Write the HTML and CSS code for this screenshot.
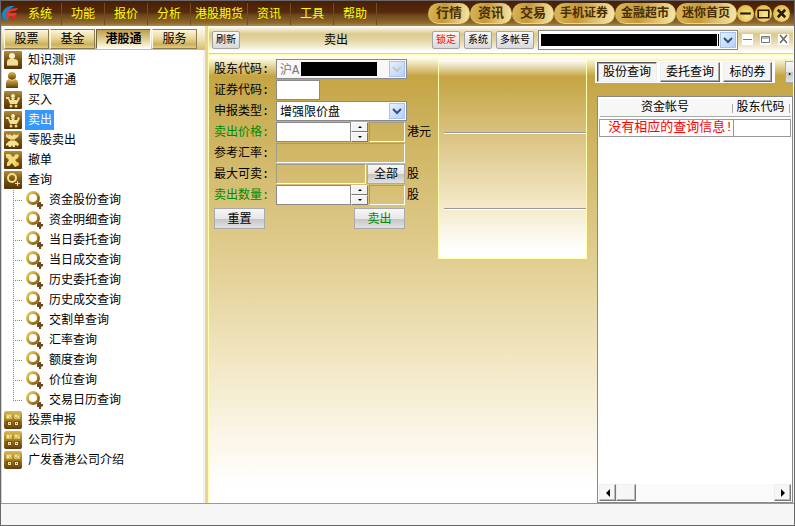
FILE: index.html
```html
<!DOCTYPE html>
<html lang="zh-CN">
<head>
<meta charset="utf-8">
<title>卖出</title>
<link rel="stylesheet" href="styles.css">
</head>
<body>
<svg class="defs" aria-hidden="true">
  <defs>
    <linearGradient id="dark" x1="0" y1="0" x2="0" y2="1"><stop offset="0" stop-color="#b18c3e"/><stop offset=".45" stop-color="#7c5716"/><stop offset="1" stop-color="#563306"/></linearGradient>
    <linearGradient id="gold" x1="0" y1="0" x2="1" y2="1"><stop offset="0" stop-color="#e8cf68"/><stop offset=".5" stop-color="#bd962f"/><stop offset="1" stop-color="#76500c"/></linearGradient>
    <linearGradient id="bust" x1="0" y1="0" x2="0" y2="1"><stop offset="0" stop-color="#d8bb59"/><stop offset=".5" stop-color="#a37b25"/><stop offset="1" stop-color="#603b07"/></linearGradient>
    <symbol id="i-person" viewBox="0 0 18 18"><rect width="18" height="18" rx="1" fill="url(#dark)"/><circle cx="8" cy="5" r="3" fill="#f8f0c4"/><path d="M3 15v-4q0-3 3-3h4q4 0 4 3v4z" fill="#f1df98"/><path d="M3 14h11v1H3z" fill="#c59c3c"/></symbol>
    <symbol id="i-bust" viewBox="0 0 18 18"><circle cx="8" cy="5" r="4" fill="url(#bust)"/><path d="M2 17v-5q0-3 3-4 3 2 6 0 3 1 3 4v5z" fill="url(#bust)"/><path d="M5 8q3 3 6 0" fill="none" stroke="#e5cf85"/></symbol>
    <symbol id="i-cart" viewBox="0 0 18 18"><rect width="18" height="18" rx="1" fill="url(#dark)"/><circle cx="9" cy="5" r="2" fill="#f8ecb5"/><path d="M2 6h3l1 3h2l-1-2h4l-1 2h3l1-3 2 1-3 6H6L4 8H2z" fill="#f3e193"/><circle cx="7" cy="15" r="1.500" fill="#ecd373"/><circle cx="12" cy="15" r="1.500" fill="#ecd373"/></symbol>
    <symbol id="i-odd" viewBox="0 0 18 18"><rect width="18" height="18" rx="1" fill="url(#dark)"/><path d="M2 3l3 1 1-1 2 2 2-2 2 1 3-1-1 3-3 2H5L2 6z" fill="#efdd91"/><path d="M6 8h5v2H6z" fill="#c7a247"/><path d="M5 10h7l3 3-1 2-3-1v2H9l-1-2-1 2H5l-1-2-2 1v-2z" fill="#f3e294"/></symbol>
    <symbol id="i-cancel" viewBox="0 0 18 18"><rect width="18" height="18" rx="1" fill="url(#dark)"/><path d="M2 3h4l3 3 3-3 3 1-1 3-3 2 3 3-1 3-2 1-3-4-3 3H3v-3l2-3-3-3z" fill="#f1dc79"/><circle cx="13" cy="13" r="2" fill="#f4c73e"/></symbol>
    <symbol id="i-search" viewBox="0 0 18 18"><rect width="18" height="18" rx="1" fill="url(#dark)"/><circle cx="8" cy="7" r="4" fill="none" stroke="#f3e18c" stroke-width="2"/><path d="M11 12h2v-2h1v2h2v1h-2v2h-1v-2h-2z" fill="#f5dc76"/></symbol>
    <symbol id="i-lens" viewBox="0 0 18 18"><circle cx="8" cy="7" r="5.500" fill="none" stroke="url(#gold)" stroke-width="3"/><path d="M11 10l4 4" stroke="#9b7324" stroke-width="2"/><path d="M12 13l2-2h2v2h2v2l-2 1v2h-2v-2h-2z" fill="#6b481a"/></symbol>
    <symbol id="i-grid" viewBox="0 0 18 18"><rect width="18" height="18" rx="2" fill="url(#bust)"/><path d="M2 3h6v5H2zM10 3h6v5h-6z" fill="#d9bb56"/><path d="M2 10h6v6H2zM10 10h6v6h-6z" fill="#76501a"/><path d="M3 4h2v3H3zM6 4h1v2H6zM11 4h2v2h-2zM14 5h1v2h-1zM4 11h3v3H4zM11 11h3v3h-3z" fill="#f5e5a2"/><path d="M5 12h1v1H5zM12 12h1v1h-1z" fill="#76501a"/></symbol>
    <symbol id="i-down" viewBox="0 0 10 10"><path d="M1 3l4 4 4-4" fill="none" stroke="currentColor" stroke-width="2"/></symbol>
  </defs>
</svg>
<div class="app">
  <header class="top">
    <svg class="logo" viewBox="0 0 16 16" aria-label="logo"><path d="M13 0C6-1 0 3 0 9q0 4 6 6C3 10 5 4 13 0z" fill="#1688cc"/><path d="M5 5q4-3 11-3-1 3-5 3-3 0-4 2h8l-2 3H8q-2 1-2 5-3-5-1-10z" fill="#ef3528"/><path d="M10 10h5q-2 4-6 5 2-2 1-5z" fill="#d8271e"/></svg>
    <nav class="menu">
      <a href="#">系统</a><a href="#">功能</a><a href="#">报价</a><a href="#">分析</a><a href="#">港股期货</a><a href="#">资讯</a><a href="#">工具</a><a href="#">帮助</a>
    </nav>
    <nav class="pills">
      <button>行情</button><button>资讯</button><button>交易</button><button>手机证券</button><button>金融超市</button><button>迷你首页</button>
    </nav>
    <div class="winbtns">
      <button aria-label="最小化"><svg viewBox="0 0 16 16"><path d="M3 8h10" stroke="#2c1700" stroke-width="2"/></svg></button>
      <button aria-label="最大化"><svg viewBox="0 0 16 16"><path d="M3 5h10v7H3z" fill="none" stroke="#2c1700" stroke-width="1.500"/></svg></button>
      <button aria-label="关闭"><svg viewBox="0 0 16 16"><path d="M4.500 4.500l7 7M11.500 4.500l-7 7" stroke="#2c1700" stroke-width="2.500"/></svg></button>
    </div>
  </header>
  <div class="main">
    <aside class="side">
      <div class="tabs">
        <button>股票</button><button>基金</button><button class="on">港股通</button><button>服务</button>
      </div>
      <ul class="tree">
        <li><a href="#"><svg><use href="#i-person"/></svg><span>知识测评</span></a></li>
        <li><a href="#"><svg><use href="#i-bust"/></svg><span>权限开通</span></a></li>
        <li><a href="#"><svg><use href="#i-cart"/></svg><span>买入</span></a></li>
        <li><a href="#" class="sel"><svg><use href="#i-cart"/></svg><span>卖出</span></a></li>
        <li><a href="#"><svg><use href="#i-odd"/></svg><span>零股卖出</span></a></li>
        <li><a href="#"><svg><use href="#i-cancel"/></svg><span>撤单</span></a></li>
        <li><a href="#"><svg><use href="#i-search"/></svg><span>查询</span></a>
          <ul>
            <li><a href="#"><svg><use href="#i-lens"/></svg><span>资金股份查询</span></a></li>
            <li><a href="#"><svg><use href="#i-lens"/></svg><span>资金明细查询</span></a></li>
            <li><a href="#"><svg><use href="#i-lens"/></svg><span>当日委托查询</span></a></li>
            <li><a href="#"><svg><use href="#i-lens"/></svg><span>当日成交查询</span></a></li>
            <li><a href="#"><svg><use href="#i-lens"/></svg><span>历史委托查询</span></a></li>
            <li><a href="#"><svg><use href="#i-lens"/></svg><span>历史成交查询</span></a></li>
            <li><a href="#"><svg><use href="#i-lens"/></svg><span>交割单查询</span></a></li>
            <li><a href="#"><svg><use href="#i-lens"/></svg><span>汇率查询</span></a></li>
            <li><a href="#"><svg><use href="#i-lens"/></svg><span>额度查询</span></a></li>
            <li><a href="#"><svg><use href="#i-lens"/></svg><span>价位查询</span></a></li>
            <li><a href="#"><svg><use href="#i-lens"/></svg><span>交易日历查询</span></a></li>
          </ul>
        </li>
        <li><a href="#"><svg><use href="#i-grid"/></svg><span>投票申报</span></a></li>
        <li><a href="#"><svg><use href="#i-grid"/></svg><span>公司行为</span></a></li>
        <li><a href="#"><svg><use href="#i-grid"/></svg><span>广发香港公司介绍</span></a></li>
      </ul>
    </aside>
    <section class="work">
      <div class="bar">
        <button class="small">刷新</button>
        <h1>卖出</h1>
        <button class="small red">锁定</button>
        <button class="small">系统</button>
        <button class="small">多帐号</button>
        <div class="combo account">
          <select aria-label="帐号"><option></option></select>
          <i class="mask"></i><i class="caret"></i>
          <span class="arrow"><svg><use href="#i-down"/></svg></span>
        </div>
        <div class="mdi">
          <button aria-label="最小化窗口"><svg viewBox="0 0 11 11"><path d="M1 5.500h9" stroke="#777"/></svg></button>
          <button aria-label="还原窗口"><svg viewBox="0 0 11 11"><path d="M1.500 2.500h8v6h-8zM1 4h9" fill="none" stroke="#777"/></svg></button>
          <button aria-label="关闭窗口"><svg viewBox="0 0 11 11"><path d="M2 1l7 8M9 1l-7 8" stroke="#666" stroke-width="1.500"/></svg></button>
        </div>
      </div>
      <div class="body">
        <form class="form">
          <label for="holder">股东代码:</label>
          <div class="combo off"><select id="holder"><option>沪A</option></select><i class="mask"></i><span class="arrow"><svg><use href="#i-down"/></svg></span></div><span></span>
          <label for="code">证券代码:</label>
          <input id="code" class="code"><span></span>
          <label for="type">申报类型:</label>
          <div class="combo"><select id="type"><option>增强限价盘</option></select><span class="arrow"><svg><use href="#i-down"/></svg></span></div><span></span>
          <label for="price" class="green">卖出价格:</label>
          <div class="line"><input id="price"><span class="spin"><button type="button" aria-label="加价"><i class="up"></i></button><button type="button" aria-label="减价"><i class="down"></i></button></span><output class="sunk tiny"></output></div><span>港元</span>
          <label for="rate">参考汇率:</label>
          <div class="line"><output id="rate" class="sunk"></output></div><span></span>
          <label for="max">最大可卖:</label>
          <div class="line"><output id="max" class="sunk"></output><button type="button" class="silver all">全部</button></div><span>股</span>
          <label for="qty" class="green">卖出数量:</label>
          <div class="line"><input id="qty"><span class="spin"><button type="button" aria-label="增加"><i class="up"></i></button><button type="button" aria-label="减少"><i class="down"></i></button></span><output class="sunk tiny"></output></div><span>股</span>
          <div class="actions"><button type="reset" class="silver">重置</button><button type="button" class="silver green">卖出</button></div>
        </form>
        <div class="quote"><div></div><div></div><div></div></div>
        <div class="result">
          <div class="rtop">
            <div class="rtabs"><button class="on">股份查询</button><button>委托查询</button><button class="short">标的券</button></div>
            <button class="silver more" aria-label="更多">.</button>
          </div>
          <div class="box">
            <table>
              <thead><tr><th class="c1">资金帐号</th><th>股东代码</th></tr></thead>
              <tbody><tr><td>没有相应的查询信息!</td><td></td></tr></tbody>
            </table>
            <div class="scroll"><button aria-label="向左"><i class="left"></i></button><button aria-label="滑块"></button><span></span><button aria-label="向右"><i class="right"></i></button></div>
          </div>
        </div>
      </div>
    </section>
  </div>
  <footer class="status"></footer>
</div>
</body>
</html>
```
FILE: styles.css
```css
* { box-sizing: border-box; }
body { margin: 0; font: 12px/16px "Liberation Mono", "Noto Sans CJK SC", sans-serif; color: #000; }
button, input, select { font: inherit; color: inherit; margin: 0; padding: 0; border-radius: 0; }
button { white-space: nowrap; padding-top: 2px; }
a { color: inherit; text-decoration: none; }
ul { list-style: none; margin: 0; padding: 0; }
svg, i { display: block; }
.defs { position: absolute; width: 0; height: 0; }
.app { display: flex; flex-direction: column; height: 100vh; border: 1px solid #686868; overflow: hidden; }

.top { display: flex; align-items: center; flex: none; height: 25px; padding-right: 4px; background: linear-gradient(#4a1e06, #552b0c 45%, #6b451a 55%, #8e6a30 88%, #b08a42); }
.logo { width: 16px; height: 16px; margin: 0 1px; flex: none; }
.menu { display: flex; flex: 1; }
.menu a { padding: 2px 9px 0; color: #ff0; line-height: 20px; border-right: 1px solid #744c22; }
.menu a:nth-child(5) { padding: 2px 4px 0; }
.pills { display: flex; }
.pills button { height: 21px; padding: 2px 7px 0 8px; border: 1px solid #eed67f; border-width: 0 1px 1px 0; border-radius: 11px; background: linear-gradient(100deg, #d9b859, #c39a38 40%, #e6cf84 80%, #f7e8ae); color: #4b2d00; font-weight: bold; font-size: 13px; }
.pills button:nth-child(n+4) { padding: 2px 6px 0; font-size: 12px; }
.winbtns { display: flex; gap: 1px; }
.winbtns button { width: 17px; height: 17px; padding: 0; border: 0; border-radius: 50%; background: radial-gradient(circle at 60% 60%, #f8e795, #e4c34d 60%, #c29530); }
.winbtns svg { width: 17px; height: 17px; }

.main { flex: 1; display: flex; min-height: 0; }
.side { flex: none; width: 207px; display: flex; flex-direction: column; border: solid; border-width: 0 3px 0 1px; border-color: #e7d595; background: #fff; }
.tabs { display: flex; flex: none; height: 24px; padding: 3px 0 1px 2px; background: linear-gradient(#fff, #eee0ad 60%, #d6bb67); }
.tabs button { width: 45px; border: 1px solid #8b7c52; background: linear-gradient(#faf5df, #e9d79a 45%, #cdb05a 80%, #e3cb82); border-left-color: #fff8d8; }
.tabs button + button { margin-left: 1px; }
.tabs .on { width: 55px; font-weight: bold; border-color: #6d6041 #fff #fff #6d6041; background: linear-gradient(#bd9f4c, #dfcc8e 50%, #fffbe9); }
.tree { flex: 1; border-right: 2px solid #f3f3f3; padding-left: 2px; }
.tree a { display: flex; align-items: center; height: 20px; }
.tree svg { width: 18px; height: 18px; flex: none; }
.tree a span { margin-left: 3px; padding: 2px 3px 0; line-height: 18px; }
.tree .sel span { background: #39f; color: #fff; padding-right: 2px; }
.tree ul { margin-left: 9px; }
.tree ul li { padding-left: 11px; background: repeating-linear-gradient(90deg, #888 0 1px, transparent 1px 2px) 0 10px / 10px 1px no-repeat, repeating-linear-gradient(#888 0 1px, transparent 1px 2px) 0 0 / 1px 100% no-repeat; }
.tree ul li:last-child { background-size: 10px 1px, 1px 10px; }
.tree ul li a { padding-left: 1px; }

.work { flex: 1; min-width: 0; display: flex; flex-direction: column; border: solid #ffffb0; border-width: 0 1px; background: linear-gradient(#fff 28px, #fffce8 32px, #c5a442 50px, #c9ad54 80px, #e1cd90 230px, #f3e8c5 340px, #fff 460px); }
.bar { display: flex; align-items: center; flex: none; height: 28px; padding: 0 4px 0 3px; gap: 4px; background: linear-gradient(#fff, #dcca8c 8px, #e5d7a8 15px, #fff 26px); border-bottom: 1px solid #ccc; }
.bar h1 { flex: 1; margin: 0; padding-top: 2px; font-size: 12px; font-weight: normal; text-align: center; }
.small { height: 18px; padding: 1px 3px 0; border: 1px solid #a3a3a3; border-radius: 2px; background: linear-gradient(#f8f8f8, #d9d9d9); font-size: 10px; }
.red { color: #f00; }
.combo { position: relative; display: flex; height: 20px; border: 1px solid #8a8a8a; background: #fff; }
.combo select { flex: 1; min-width: 0; appearance: none; border: 0; padding: 1px 0 0 3px; background: transparent; }
.arrow { position: absolute; right: 1px; top: 1px; bottom: 1px; width: 16px; display: flex; align-items: center; justify-content: center; border: 1px solid #a8c3ef; background: linear-gradient(135deg, #e7f0ff, #b6d0fb); color: #35517c; pointer-events: none; }
.arrow svg { width: 10px; height: 10px; }
.off { color: #777; background: #f8f8f8; }
.off .arrow { color: #c9c7bd; }
.mask { position: absolute; left: 24px; top: 2px; bottom: 2px; width: 76px; background: #000; pointer-events: none; }
.account { width: 200px; }
.account .mask { left: 2px; right: 20px; top: 3px; bottom: 3px; width: auto; }
.caret { position: absolute; right: 18px; top: 3px; bottom: 3px; width: 1px; background: #000; }
.mdi { display: flex; gap: 7px; }
.mdi button { width: 11px; height: 11px; padding: 0; border: 0; background: #fff; }

.body { flex: 1; min-height: 0; display: flex; padding: 4px 0 0 5px; border-top: 1px solid #ffffb0; overflow: hidden; }
.form { flex: none; display: grid; grid-template-columns: 58px 131px 27px; column-gap: 4px; grid-auto-rows: 20px; row-gap: 1px; align-content: start; width: 224px; line-height: 20px; }
.form label, .form > span { padding-top: 1px; }
.form > span { margin-left: -4px; }
.green { color: #008a00; }
.form input { height: 20px; min-width: 0; border: 1px solid #8a8a8a; background: #fff; }
.form .code { width: 44px; }
.line { display: flex; width: 129px; }
.line input { width: 75px; }
.spin { width: 17px; display: flex; flex-direction: column; }
.spin button { flex: 1; display: flex; align-items: center; justify-content: center; padding: 0; border: 1px solid; border-color: #fff #777 #777 #fff; background: #f3f3f3; }
.up, .down, .left, .right { width: 0; height: 0; border: solid transparent; }
.up { border-width: 0 2px 2px; border-bottom-color: #000; }
.down { border-width: 2px 2px 0; border-top-color: #000; }
.left { border-width: 4px 4px 4px 0; border-right-color: #000; }
.right { border-width: 4px 0 4px 4px; border-left-color: #000; }
.sunk { flex: 1; border: 1px solid; border-color: #a39b85 #fff #fff #a39b85; }
.tiny { margin-left: 1px; }
.silver { border: 1px solid #aaa; background: linear-gradient(#f7f7f7, #e7e7e7 50%, #c5c5c5 52%, #e1e1e1); line-height: 16px; }
.all { width: 38px; margin-left: 1px; }
.actions { grid-column: 1 / 3; display: flex; justify-content: space-between; width: 191px; height: 23px; padding-top: 2px; }
.actions button { width: 51px; }
.quote { flex: none; width: 149px; height: 200px; display: flex; flex-direction: column; padding: 0 0 0 5px; border: 1px solid #ffffb0; background: linear-gradient(#fff, #c5a442 17px, #dcc587 80px, #f3e8c7 145px, #fff 190px); }
.quote div { height: 76px; border-bottom: 1px solid #999; box-shadow: 0 1px #fff; }
.quote div:first-child { height: 73px; }
.quote div:last-child { border: 0; box-shadow: none; height: auto; }
.result { flex: 1; min-width: 0; display: flex; flex-direction: column; padding-left: 8px; }
.rtop { display: flex; flex: none; gap: 10px; padding-top: 2px; }
.rtabs { display: flex; flex: none; gap: 3px; width: 180px; height: 22px; padding: 1px 2px; background: #fcfcfc; }
.rtabs button { width: 60px; border: 1px solid; border-color: #eee #666 #666 #eee; box-shadow: inset -1px -1px #aaa; background: #f5f5f5; }
.rtabs .short { width: 49px; }
.rtabs .on { border-color: #555 #eee #eee #555; box-shadow: inset 1px 1px #aaa; }
.more { flex: 1; min-width: 0; height: 22px; padding: 0; border-right: 0; }
.box { flex: 1; min-height: 0; display: flex; flex-direction: column; justify-content: space-between; margin: 13px 0 0 2px; padding: 2px 1px 1px; border: 1px solid #888; background: #fff; }
table { width: 100%; border-collapse: collapse; table-layout: fixed; }
th { height: 16px; padding: 1px 3px 0 0; font-weight: normal; background: linear-gradient(#aaa, #aaa) right 1px top 5px / 1px 9px no-repeat #f7f7f7; border-bottom: 1px solid #aaa; }
.c1 { width: 134px; }
td { height: 17px; padding: 0; border: 1px solid #999; color: #f00; font-size: 13px; line-height: 16px; text-align: right; white-space: nowrap; }
thead::after { content: ""; display: block; height: 2px; }
.scroll { display: flex; height: 17px; flex: none; background: #fafafa; }
.scroll span { flex: 1; }
.scroll button { width: 17px; display: flex; align-items: center; justify-content: center; padding: 0; border: 1px solid; border-color: #eee #777 #777 #eee; box-shadow: inset -1px -1px #bbb; background: #f6f6f6; }
.scroll button:nth-child(2) { width: 20px; }
.status { flex: none; height: 22px; border-top: 1px solid #999; background: #f6f6f6; }
```
